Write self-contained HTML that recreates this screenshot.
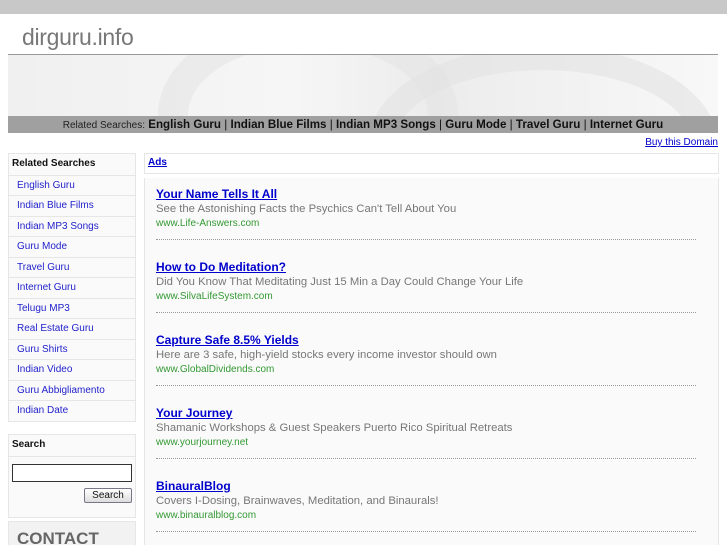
<!DOCTYPE html>
<html><head><style>
*{margin:0;padding:0;box-sizing:border-box}
html,body{width:727px;height:545px;overflow:hidden}
body{background:#fff;font-family:"Liberation Sans",sans-serif;position:relative}
.top{position:absolute;left:0;top:0;width:727px;height:14px;background:#c8c8c8}
.title{position:absolute;left:22px;top:24px;font-size:23px;color:#777;letter-spacing:-0.3px}
.hl{position:absolute;left:8px;top:54px;width:710px;height:1px;background:#999}
.img{position:absolute;left:8px;top:55px;width:710px;height:61px;background:linear-gradient(90deg,#f0f0f0,#f6f6f6 40%,#ececec 60%,#f8f8f8);overflow:hidden}
.nav{position:absolute;left:8px;top:116px;width:710px;height:17px;background:#a0a0a0;text-align:center;font-size:11.6px;line-height:17px;color:#111}
.nav small{font-size:10px;color:#222}
.buy{position:absolute;right:9px;top:137px;font-size:10px;color:#00c;text-decoration:underline}
.lb{position:absolute;left:8px;width:128px;border:1px solid #e6e6e6;background:#fafafa}
.lb div{height:20.5px;border-top:1px solid #e6e6e6;font-size:10px;line-height:19px;padding-left:8px;color:#22c}
.lb div.h{border-top:none;color:#111;font-weight:bold;padding-left:3px}
.main{position:absolute;left:144px;top:153px;width:575px;height:400px}
.ads{height:21px;border:1px solid #e6e6e6;font-size:10px;font-weight:bold;color:#00c;text-decoration:underline;padding:3px 0 0 3px}
.ml{position:absolute;left:0;top:25px;width:575px;height:380px;border-left:1px solid #e6e6e6;border-right:1px solid #e6e6e6;background:#fafafa}
.ad{position:absolute;left:11px;width:540px;border-bottom:1px dotted #999;height:54px}
.ad a{display:block;font-size:12px;font-weight:bold;color:#00c;text-decoration:underline;line-height:16px;height:16px}
.ad p{font-size:11.3px;color:#777;line-height:15px;height:15px}
.ad span{display:block;font-size:10px;color:#393;line-height:13px}
</style></head><body>
<div class="top"></div>
<div class="img"><div style="position:absolute;left:150px;top:-40px;width:300px;height:200px;border-radius:50%;border:30px solid #e4e4e4;opacity:.6"></div><div style="position:absolute;left:360px;top:-10px;width:350px;height:200px;border-radius:50%;border:25px solid #e2e2e2;opacity:.6"></div></div>
<div class="title">dirguru.info</div>
<div class="hl"></div>
<div class="nav"><small>Related Searches:</small> <b>English Guru</b> | <b>Indian Blue Films</b> | <b>Indian MP3 Songs</b> | <b>Guru Mode</b> | <b>Travel Guru</b> | <b>Internet Guru</b></div>
<div class="buy">Buy this Domain</div>
<div class="lb" style="top:153px"><div class="h">Related Searches</div><div>English Guru</div><div>Indian Blue Films</div><div>Indian MP3 Songs</div><div>Guru Mode</div><div>Travel Guru</div><div>Internet Guru</div><div>Telugu MP3</div><div>Real Estate Guru</div><div>Guru Shirts</div><div>Indian Video</div><div>Guru Abbigliamento</div><div>Indian Date</div></div>
<div class="lb" style="top:434px;height:84px"><div class="h" style="height:21px">Search</div><div style="height:62px;padding:7px 3px"><div style="border:1px solid #333;height:18px;background:#fff;padding:0"></div><div style="border:1px solid #778;border-radius:2px;width:48px;height:15px;margin:6px 0 0 72px;background:linear-gradient(#fff,#ddd);font-size:10px;line-height:13px;color:#111;text-align:center;padding:0">Search</div></div></div>
<div class="lb" style="top:521px;height:40px;background:#f2f2f2"><div style="border:none;font-size:17px;font-weight:bold;color:#666;padding:8px 0 0 8px;line-height:18px">CONTACT</div></div>
<div class="main"><div class="ads">Ads</div><div class="ml">
<div class="ad" style="top:8px"><a>Your Name Tells It All</a><p>See the Astonishing Facts the Psychics Can't Tell About You</p><span>www.Life-Answers.com</span></div>
<div class="ad" style="top:81px"><a>How to Do Meditation?</a><p>Did You Know That Meditating Just 15 Min a Day Could Change Your Life</p><span>www.SilvaLifeSystem.com</span></div>
<div class="ad" style="top:154px"><a>Capture Safe 8.5% Yields</a><p>Here are 3 safe, high-yield stocks every income investor should own</p><span>www.GlobalDividends.com</span></div>
<div class="ad" style="top:227px"><a>Your Journey</a><p>Shamanic Workshops &amp; Guest Speakers Puerto Rico Spiritual Retreats</p><span>www.yourjourney.net</span></div>
<div class="ad" style="top:300px"><a>BinauralBlog</a><p>Covers I-Dosing, Brainwaves, Meditation, and Binaurals!</p><span>www.binauralblog.com</span></div>
</div></div>
</body></html>
